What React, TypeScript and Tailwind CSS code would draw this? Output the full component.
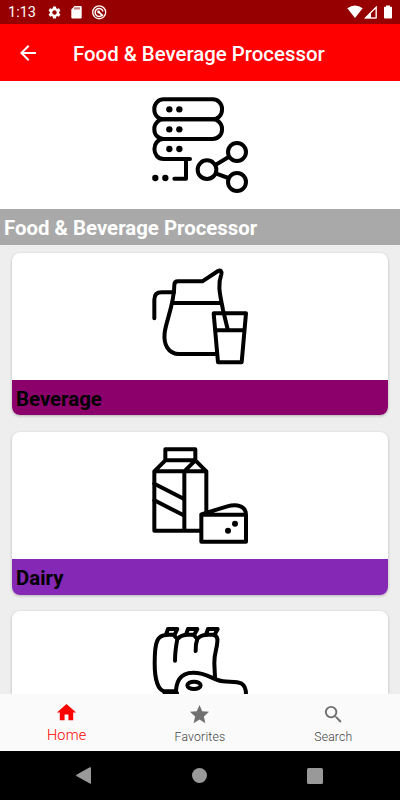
import type { ReactNode } from "react"
import { MdArrowBack, MdHome, MdSearch, MdSettings, MdStar } from "react-icons/md"

function LineArt({ children }: { children: ReactNode }) {
  return (
    <svg
      className="block h-28 w-[120px]"
      viewBox="0 0 360 336"
      fill="none"
      stroke="#000"
      strokeWidth="12"
      strokeLinecap="round"
      strokeLinejoin="round"
    >
      {children}
    </svg>
  )
}

function ServerIcon() {
  return (
    <LineArt>
      <rect x="43" y="34" width="203" height="60" rx="28" />
      <rect x="43" y="94" width="203" height="59" rx="28" />
      <path d="M71 153C34 153 34 213 71 213H150M138 213V272H103" />
      <g fill="#000" stroke="none">
        <circle cx="88" cy="64" r="9.5" />
        <circle cx="118" cy="64" r="9.5" />
        <circle cx="88" cy="124" r="9.5" />
        <circle cx="118" cy="124" r="9.5" />
        <circle cx="88" cy="183" r="9.5" />
        <circle cx="118" cy="183" r="9.5" />
        <circle cx="46" cy="270" r="9.5" />
        <circle cx="76" cy="270" r="9.5" />
      </g>
      <circle cx="201" cy="245" r="28" />
      <circle cx="291" cy="192" r="27" />
      <circle cx="291" cy="282" r="27" />
      <path d="M226 231L266 207M229 257L265 270" />
    </LineArt>
  )
}

function JugIcon() {
  return (
    <LineArt>
      <path d="M43 175V119Q43 97 65 97H102" />
      <path d="M228 282H118C84 282 70 252 74 218C78 184 103 130 103 75Q103 64 114 64H187L234 33Q246 28 244 43C232 75 240 103 249 150L263 208" />
      <path d="M98 129H243" />
      <path d="M221 160H318L305 307H234ZM226 211H312" />
    </LineArt>
  )
}

function MilkIcon() {
  return (
    <LineArt>
      <path d="M76 28H166V61H76ZM76 61L43 94V272H180M166 61L199 94V215M43 94H199M166 61L133 94V272" />
      <path d="M43 131L131 176M43 181L131 226" />
      <path d="M184 224H318V305H184ZM184 223L262 199C292 191 318 199 318 224" />
      <circle cx="285" cy="251" r="9" fill="#000" stroke="none" />
      <circle cx="264" cy="272" r="9" fill="#000" stroke="none" />
    </LineArt>
  )
}

function MeatIcon() {
  return (
    <LineArt>
      <path d="M80 60C53 61 44 76 44 145C44 190 53 224 72 229H108" />
      <path d="M105 137C105 110 109 88 112 72L101 60M112 72Q124 60 137 60M167 108C166 93 169 80 172 72L161 60M172 72Q182 60 198 60M222 60Q234 64 232 80C231 105 222 114 223 145L225 187" />
      <path d="M78 59L84 42H112L104 59ZM138 59L144 42H172L163 59ZM198 59L204 42H233L224 59Z" />
      <path d="M108 244C106 203 118 173 159 173C205 173 215 195 249 199C283 203 319 191 318 240" />
      <ellipse cx="162" cy="211" rx="20" ry="11" />
      <path d="M74 234H111" />
    </LineArt>
  )
}

const categories = [
  { title: "Beverage", icon: JugIcon, card: "h-[162.5px] mb-[16.5px]", art: "pt-[7px] h-[127px]", label: "bg-[#8b006b]" },
  { title: "Dairy", icon: MilkIcon, card: "h-[163px] mb-4", art: "pt-2 h-[127.5px]", label: "bg-[#8428b5]" },
  { title: "", icon: MeatIcon, card: "h-[162.5px]", art: "pt-1 h-[127px]", label: "" },
]

function StatusBar() {
  return (
    <div className="flex h-6 shrink-0 items-center bg-[#960000] pl-2 text-white">
      <span className="w-[39px] pt-px text-[14.5px] leading-6">1:13</span>
      <MdSettings className="size-[15px]" />
      <svg className="ml-2 h-6 w-3" viewBox="0 0 12 24" fill="currentColor">
        <path d="M4.5 6H10.7Q11.7 6 11.7 7V17.5Q11.7 18.5 10.7 18.5H2.3Q1.3 18.5 1.3 17.5V9.5Z" />
        <path d="M5 7.3V9.5M7 7.3V9.5M9 7.3V9.5" stroke="#960000" />
      </svg>
      <svg className="ml-[9px] h-6 w-4" viewBox="0 0 16 24" fill="none" stroke="currentColor">
        <circle cx="8.2" cy="12.3" r="6.5" strokeWidth="1.3" />
        <path d="M10.8 15.4A4 4 0 1 1 12 11.5" strokeWidth="1.5" />
        <path d="M6.8 11.2L12 15.8" strokeWidth="1.8" />
        <circle cx="7.6" cy="12" r="1.4" fill="currentColor" stroke="none" />
      </svg>
      <svg className="ml-auto h-6 w-[54px]" viewBox="346 0 54 24" fill="currentColor">
        <path d="M347.3 8.2Q355 2.7 362.7 8.2L355 18Z" />
        <path d="M376.5 6V18.5H364ZM371 13.2V17.5H375.5V8.7Z" fillRule="evenodd" />
        <path d="M376.5 6.5V18H365Z" fill="none" stroke="#ffffff" strokeOpacity=".7" />
        <path d="M386 5.5H390V6.8H391.2Q392 6.8 392 7.6V17.7Q392 18.5 391.2 18.5H384.8Q384 18.5 384 17.7V7.6Q384 6.8 384.8 6.8H386Z" />
      </svg>
    </div>
  )
}

function BottomNav() {
  return (
    <nav className="grid h-[57px] shrink-0 grid-cols-3 bg-[#fafafa] text-center text-[#707070]">
      <div className="flex flex-col items-center pt-[7px] text-[#ff0000]">
        <MdHome className="size-[23px]" />
        <span className="mt-0.5 text-[14.5px] font-light leading-5 tracking-[0.2px]">Home</span>
      </div>
      <div className="flex flex-col items-center pt-[9px]">
        <MdStar className="size-[23px]" />
        <span className="mt-px text-[12.2px] font-light leading-5 tracking-[0.2px] text-[#444]">Favorites</span>
      </div>
      <div className="flex flex-col items-center pt-[9px]">
        <MdSearch className="size-[23px]" />
        <span className="mt-px text-[12.2px] font-light leading-5 tracking-[0.2px] text-[#444]">Search</span>
      </div>
    </nav>
  )
}

function SystemNav() {
  return (
    <div className="flex h-[49px] shrink-0 items-center justify-between bg-black pl-[76px] pr-[77px]">
      <svg className="h-[17px] w-[15px]" viewBox="0 0 15 17" fill="#999">
        <path d="M0.8 7.6L13.8 0.3Q15 0 15 1V16Q15 17 13.8 16.6L0.8 9.3Q-.4 8.5.8 7.6Z" />
      </svg>
      <div className="ml-px size-[15px] rounded-full bg-[#999]" />
      <div className="size-4 rounded-[1.5px] bg-[#999]" />
    </div>
  )
}

export default function App() {
  return (
    <div className="flex h-[800px] w-[400px] flex-col overflow-hidden bg-[#eeeeee] font-['Roboto',sans-serif]">
      <StatusBar />
      <header className="flex h-[57px] shrink-0 items-center bg-[#ff0000] pl-4 text-white">
        <MdArrowBack className="size-6" />
        <h1 className="ml-[33px] pt-[3px] text-[20.4px] font-medium leading-6">Food &amp; Beverage Processor</h1>
      </header>

      <main className="min-h-0 flex-1 overflow-hidden">
        <div className="flex h-32 justify-center bg-white pt-[7px]">
          <ServerIcon />
        </div>
        <h2 className="h-[35.5px] bg-[#a9a9a9] pl-1 pt-px text-[20.4px] font-bold leading-9 text-white">
          Food &amp; Beverage Processor
        </h2>
        <div className="px-3 pt-2">
          {categories.map((item, index) => (
            <section
              key={index}
              className={`overflow-hidden rounded-lg bg-white shadow-[0_1px_3px_rgba(0,0,0,0.25)] ${item.card}`}
            >
              <div className={`flex justify-center ${item.art}`}>
                <item.icon />
              </div>
              {item.title && (
                <h3 className={`h-9 pl-1 pt-px text-[20.4px] font-bold leading-9 text-black ${item.label}`}>
                  {item.title}
                </h3>
              )}
            </section>
          ))}
        </div>
      </main>

      <BottomNav />
      <SystemNav />
    </div>
  )
}
